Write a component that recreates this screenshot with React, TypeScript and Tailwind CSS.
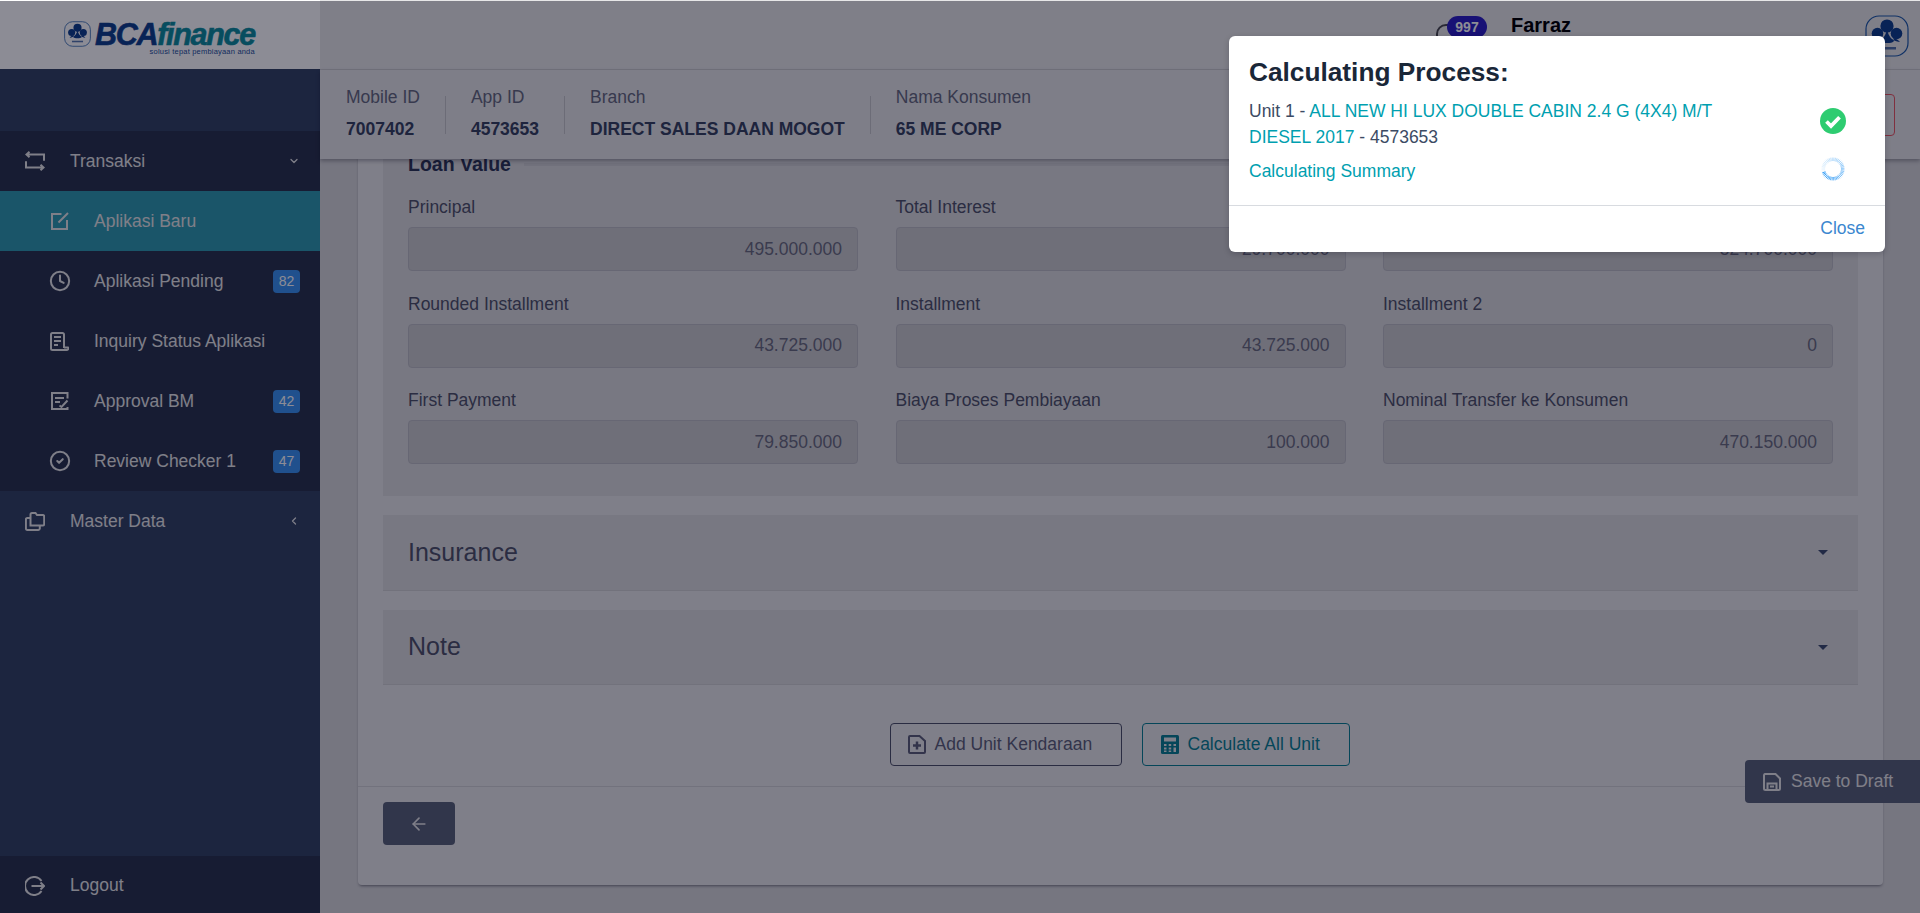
import { Fragment } from "react";
import { ChevronDown, ChevronLeft, Clock, CircleCheck, ArrowLeft } from "lucide-react";

const font = "font-['Liberation_Sans',Arial,sans-serif]";

function LogoMark({ className }: { className: string }) {
    return (
        <svg viewBox="0 0 44 42" className={className} fill="none">
            <rect x="1" y="1" width="42" height="40" rx="13" stroke="#1d5aa8" strokeWidth="1.2" />
            <circle cx="22" cy="11" r="6.6" fill="#0f3f8c" />
            <circle cx="12.5" cy="18.5" r="5.8" fill="#0f3f8c" />
            <circle cx="31.5" cy="18.5" r="5.8" fill="#0f3f8c" />
            <path d="M22 14c-1.5 8-5 12-13 13 3-3 5-4 7-4-2 3-1 5 6 5s8-2 6-5c2 0 4 1 7 4-8-1-11.500-5-13-13z" fill="#0f3f8c" />
            <rect x="13" y="32" width="18" height="2.500" fill="#0f3f8c" opacity="0.7" />
        </svg>
    );
}

function LoopIcon() {
    return (
        <svg viewBox="0 0 20 20" className="w-5 h-5" fill="none" stroke="currentColor" strokeWidth="2">
            <path d="M4.500 0.800 1.500 3.500l3 2.700M1.800 3.500H19v6.200" />
            <path d="M15.500 13.800l3 2.700-3 2.700M18.200 16.500H1v-6.200" />
        </svg>
    );
}

function NoteIcon() {
    return (
        <svg viewBox="0 0 18 18" className="w-[18px] h-[18px]" fill="none" stroke="currentColor" strokeWidth="2">
            <path d="M10.500 2H1v15h15V8" />
            <path d="M7.500 10.500 17 1" />
        </svg>
    );
}

function ReceiptIcon() {
    return (
        <svg viewBox="0 0 19 19" className="w-[19px] h-[19px]" fill="none" stroke="currentColor" strokeWidth="2">
            <path d="M14 16V2.500A1.500 1.500 0 0 0 12.500 1h-10A1.500 1.500 0 0 0 1 2.500v14A1.500 1.500 0 0 0 2.500 18H17a1.500 1.500 0 0 0 1-2.500H14" />
            <path d="M4 5h7M4 9h7M4 13h4" />
        </svg>
    );
}

function ApprovalIcon() {
    return (
        <svg viewBox="0 0 18 18" className="w-[18px] h-[18px]" fill="none" stroke="currentColor" strokeWidth="2">
            <path d="M16.500 6.500V1H1v16h15.500v-2" />
            <path d="M4 6h9M4 10h5" />
            <path d="m8.500 13.500 2 1.500 6-6.500" />
        </svg>
    );
}

function FolderIcon() {
    return (
        <svg viewBox="0 0 20 19" className="w-5 h-[19px]" fill="none" stroke="currentColor" strokeWidth="2">
            <path d="M5.500 13.500V2.500A1.500 1.500 0 0 1 7 1h3.500l1.500 2h6A1.500 1.500 0 0 1 19.200 4.500v7.500a1.500 1.500 0 0 1-1.500 1.500z" />
            <path d="M5 6H2.300A1.500 1.500 0 0 0 .9 7.500v9.200A1.500 1.500 0 0 0 2.300 18h11a1.500 1.500 0 0 0 1.500-1.300V14" />
        </svg>
    );
}

function LogoutIcon() {
    return (
        <svg viewBox="0 0 20 20" className="w-5 h-5" fill="none" stroke="currentColor" strokeWidth="2">
            <path d="M16.500 5A9 9 0 1 0 16.500 15" />
            <path d="M6.500 10H19M15.500 6.500 19 10l-3.500 3.500" />
        </svg>
    );
}

function FilePlusIcon() {
    return (
        <svg viewBox="0 0 18 19" className="w-[18px] h-[19px]" fill="none">
            <path d="M2 1h9.500L17 6v11a1 1 0 0 1-1 1H2a1 1 0 0 1-1-1V2a1 1 0 0 1 1-1z" stroke="currentColor" strokeWidth="2" />
            <path d="M9 6.500v8M5 10.500h8" stroke="currentColor" strokeWidth="2.500" />
        </svg>
    );
}

function CalculatorIcon() {
    return (
        <svg viewBox="0 0 18 19" className="w-[18px] h-[19px]">
            <rect x="0" y="0" width="18" height="19" rx="1.500" fill="currentColor" />
            <rect x="3" y="2.500" width="12" height="4" fill="#e8e8e8" />
            <path d="M3 9h2.500v2H3zM7.700 9h2.500v2H7.700zM12.500 9H15v2h-2.500zM3 12.500h2.500v2H3zM7.700 12.500h2.500v2H7.700zM12.500 12.500H15V17h-2.500zM3 15.500h2.500V17H3zM7.700 15.500h2.500V17H7.700z" fill="#e8e8e8" />
        </svg>
    );
}

function SaveIcon() {
    return (
        <svg viewBox="0 0 18 18" className="w-[18px] h-[18px]" fill="none" stroke="currentColor" strokeWidth="2">
            <path d="M2 1h10.500L17 5.500V15.500a1.500 1.500 0 0 1-1.500 1.500h-13A1.500 1.500 0 0 1 1 15.500v-13A1.500 1.500 0 0 1 2 1z" />
            <path d="M4.500 17v-6.500h9V17M7 13.500h4" />
        </svg>
    );
}

function Spinner() {
    const ticks = Array.from({ length: 44 }, (_, i) => i);
    return (
        <svg viewBox="0 0 24 24" className="w-6 h-6">
            {ticks.map((i) => (
                <line
                    key={i}
                    x1="12"
                    y1="0.500"
                    x2="12"
                    y2="4"
                    stroke="#1f93f5"
                    strokeWidth="0.800"
                    opacity={1 - (i / 44) * 0.95}
                    transform={`rotate(${250 - i * (360 / 44)} 12 12)`}
                />
            ))}
        </svg>
    );
}

const subItems = [
    { label: "Aplikasi Baru", icon: <NoteIcon />, active: true },
    { label: "Aplikasi Pending", icon: <Clock className="w-[22px] h-[22px] shrink-0" strokeWidth={2.200} />, badge: "82" },
    { label: "Inquiry Status Aplikasi", icon: <ReceiptIcon /> },
    { label: "Approval BM", icon: <ApprovalIcon />, badge: "42" },
    { label: "Review Checker 1", icon: <CircleCheck className="w-[22px] h-[22px] shrink-0" strokeWidth={2.200} />, badge: "47" },
];

const meta = [
    { label: "Mobile ID", value: "7007402" },
    { label: "App ID", value: "4573653" },
    { label: "Branch", value: "DIRECT SALES DAAN MOGOT" },
    { label: "Nama Konsumen", value: "65 ME CORP" },
];

const fields = [
    { label: "Principal", value: "495.000.000" },
    { label: "Total Interest", value: "29.700.000" },
    { label: "Total", value: "524.700.000" },
    { label: "Rounded Installment", value: "43.725.000" },
    { label: "Installment", value: "43.725.000" },
    { label: "Installment 2", value: "0" },
    { label: "First Payment", value: "79.850.000" },
    { label: "Biaya Proses Pembiayaan", value: "100.000" },
    { label: "Nominal Transfer ke Konsumen", value: "470.150.000" },
];

function Sidebar() {
    return (
        <aside className="w-[320px] shrink-0 flex flex-col bg-[#334363] text-[#e7e7e8]">
            <div className="h-[69px] bg-white flex items-start pl-[64px] pt-[21px] gap-[4px]">
                <LogoMark className="w-[27px] h-[26px]" />
                <div className="flex flex-col">
                    <div className="text-[30.500px] leading-[26px] font-bold italic tracking-[-1.300px] [-webkit-text-stroke:0.6px]">
                        <span className="text-[#0f3f8c]">BCA</span>
                        <span className="text-[#0c8c9c]">finance</span>
                    </div>
                    <div className="text-[7.500px] leading-[9px] text-[#1d4f9a] self-end tracking-[0.200px]">solusi tepat pembiayaan anda</div>
                </div>
            </div>
            <div className="h-[62px]" />
            <div className="bg-[#2a334c]">
                <div className="h-[60px] flex items-center pl-[25px] pr-[20px]">
                    <LoopIcon />
                    <span className="ml-[25px] flex-1">Transaksi</span>
                    <ChevronDown className="w-[12px] h-[12px]" strokeWidth={2.500} />
                </div>
                {subItems.map((item) => (
                    <div key={item.label} className={`h-[60px] flex items-center pl-[50px] pr-[20px] ${item.active ? "bg-[#2f9bae]" : ""}`}>
                        <span className="w-[19px] flex justify-center">{item.icon}</span>
                        <span className="ml-[25px] flex-1">{item.label}</span>
                        {item.badge && (
                            <span className="w-[27px] h-[23px] rounded-[4px] bg-[#3a92f0] text-white text-[14px] flex items-center justify-center">{item.badge}</span>
                        )}
                    </div>
                ))}
            </div>
            <div className="h-[60px] flex items-center pl-[25px] pr-[20px]">
                <FolderIcon />
                <span className="ml-[25px] flex-1">Master Data</span>
                <ChevronLeft className="w-[12px] h-[12px]" strokeWidth={2.500} />
            </div>
            <div className="mt-auto h-[57px] bg-[#2a334c] flex items-center pl-[25px] pt-[2px]">
                <LogoutIcon />
                <span className="ml-[25px]">Logout</span>
            </div>
        </aside>
    );
}

function TopBar() {
    return (
        <header className="h-[70px] shrink-0 bg-[#e7e7e8] border-b border-[#d0d0d2] flex justify-end pr-[11px]">
            <div className="relative mt-[24px] w-[28px] h-[28px] rounded-[10px] border-2 border-[#4a4a50]">
                <span className="absolute left-[9px] -top-[10px] w-[40px] h-[22px] rounded-full bg-[#2c1fc4] text-white text-[14px] font-bold flex items-center justify-center">997</span>
            </div>
            <div className="ml-[47px] w-[354px] pt-[13px]">
                <div className="text-[20px] leading-[24px] font-bold text-black">Farraz</div>
            </div>
            <LogoMark className="mt-[15px] w-[44px] h-[42px]" />
        </header>
    );
}

function SubHeader() {
    return (
        <div className="relative z-10 h-[89px] shrink-0 bg-[#e5e5e7] flex items-center justify-between pl-[26px] pr-[25px] shadow-[0_2px_4px_rgba(0,0,21,0.3)]">
            <div className="flex items-center">
                {meta.map((m, i) => (
                    <Fragment key={m.label}>
                        {i > 0 && <div className="w-px h-[38px] mx-[25px] bg-[#c4c4c8]" />}
                        <div className="flex flex-col gap-[12px] pb-[3px]">
                            <span className="text-[#66697e] leading-[20px]">{m.label}</span>
                            <span className="text-[#36425f] font-bold leading-[20px]">{m.value}</span>
                        </div>
                    </Fragment>
                ))}
            </div>
            <div className="w-[110px] h-[42px] rounded-[4px] border border-[#ea5762]" />
        </div>
    );
}

function Field({ label, value }: { label: string; value: string }) {
    return (
        <div className="flex flex-col">
            <label className="text-[#4f5268] leading-[26px] mb-[7px]">{label}</label>
            <div className="h-[44px] rounded-[4px] border border-[#bcbcc2] bg-[#cacacc] flex items-center justify-end px-[15px] text-[#6a6c7e]">{value}</div>
        </div>
    );
}

function Collapsed({ title, height }: { title: string; height: string }) {
    return (
        <div className={`${height} bg-[#dadadc] border-b border-[#cfcfd2] flex items-center justify-between pl-[25px] pr-[30px]`}>
            <span className="text-[25px] text-[#4f5268]">{title}</span>
            <span className="w-0 h-0 border-x-[5px] border-x-transparent border-t-[5px] border-t-[#3e4c70]" />
        </div>
    );
}

function Card() {
    return (
        <div className="bg-[#e8e8e9] rounded-[4px] shadow-[0_2px_3px_-1px_rgba(0,0,21,0.45)] shrink-0">
            <div className="px-[25px] flex flex-col gap-[19px]">
                <section className="bg-[#dadadc] px-[25px] pb-[32px]">
                    <div className="flex items-center gap-[13px] h-[24px]">
                        <h3 className="text-[19.500px] leading-[24px] font-bold text-[#2d3656]">Loan Value</h3>
                        <div className="flex-1 h-[3px] bg-[#cfcfd3]" />
                    </div>
                    <div className="grid grid-cols-3 gap-x-[37.500px] gap-y-[19.500px] mt-[18px]">
                        {fields.map((f) => (
                            <Field key={f.label} label={f.label} value={f.value} />
                        ))}
                    </div>
                </section>
                <Collapsed title="Insurance" height="h-[76px]" />
                <Collapsed title="Note" height="h-[75px]" />
            </div>
            <div className="flex justify-center gap-[20px] mt-[38px] mb-[20px] pr-[2px]">
                <button className="h-[43px] w-[232px] rounded-[4px] border border-[#4d5068] text-[#5c5f78] flex items-center pl-[17px] gap-[9px]">
                    <FilePlusIcon />
                    Add Unit Kendaraan
                </button>
                <button className="h-[43px] w-[208px] rounded-[4px] border border-[#0a7f92] text-[#0a7f92] flex items-center pl-[18px] gap-[9px]">
                    <CalculatorIcon />
                    Calculate All Unit
                </button>
            </div>
            <div className="border-t border-[#d0d0d3] px-[25px] pt-[15px] h-[99px]">
                <button className="w-[72px] h-[43px] rounded-[4px] bg-[#5a6278] text-[#e7e7e8] flex items-center justify-center">
                    <ArrowLeft className="w-[20px] h-[20px]" strokeWidth={2} />
                </button>
            </div>
        </div>
    );
}

function CalcModal() {
    return (
        <div className="absolute left-[1229px] top-[36px] w-[656px] bg-white rounded-[6px] text-[#3c4b64] shadow-[0_2px_6px_rgba(0,0,21,0.2)]">
            <div className="px-[20px] pt-[21px] pb-[20px] border-b border-[#d8dbe0]">
                <h2 className="text-[26.250px] leading-[31px] font-bold text-[#1a2738] mb-[10px]">Calculating Process:</h2>
                <div className="flex items-center justify-between">
                    <p className="w-[480px] leading-[26.250px]">
                        Unit 1 - <span className="text-[#009fb0]">ALL NEW HI LUX DOUBLE CABIN 2.4 G (4X4) M/T DIESEL 2017</span> - 4573653
                    </p>
                    <svg viewBox="0 0 26 26" className="w-[26px] h-[26px] mr-[19px] mb-[6px]">
                        <circle cx="13" cy="13" r="13" fill="#2ecc71" />
                        <path d="M6.500 13.500l4.500 4.500 8.500-8.800" fill="none" stroke="white" strokeWidth="3.800" />
                    </svg>
                </div>
                <div className="flex items-center justify-between mt-[8px] h-[26px]">
                    <span className="text-[#009fb0] leading-[26.250px]">Calculating Summary</span>
                    <div className="mr-[20px] mb-[6px]">
                        <Spinner />
                    </div>
                </div>
            </div>
            <div className="h-[46px] flex items-center justify-end pr-[20px] text-[#3b87cf]">Close</div>
        </div>
    );
}

export default function App() {
    return (
        <div className={`relative h-[913px] overflow-hidden flex bg-white text-[17.500px] ${font}`}>
            <Sidebar />
            <main className="flex-1 min-w-0 flex flex-col bg-[#d7d7d9]">
                <TopBar />
                <SubHeader />
                <div className="flex-1 min-h-0 overflow-hidden flex flex-col justify-end pl-[38px] pr-[37px] pb-[28px]">
                    <Card />
                </div>
            </main>
            <div className="absolute right-0 top-[760px] w-[175px] h-[43px] rounded-l-[4px] bg-[#5a6278] text-[#e7e7e8] flex items-center pl-[18px] gap-[10px] z-10">
                <SaveIcon />
                Save to Draft
            </div>
            <div className="absolute inset-x-0 top-px bottom-0 z-20 bg-[#000015]/45" />
            <div className="absolute inset-0 z-30 pointer-events-none">
                <CalcModal />
            </div>
        </div>
    );
}
